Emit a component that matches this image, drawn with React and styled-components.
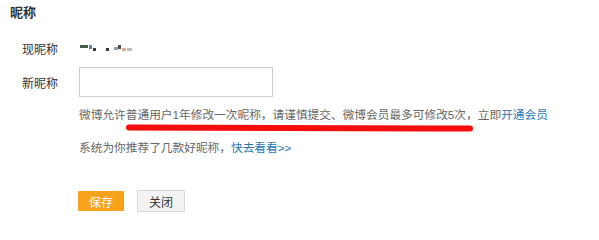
import React from "react";
import styled, { createGlobalStyle } from "styled-components";

const GlobalStyle = createGlobalStyle`
  body {
    margin: 0;
    background: #fff;
    font-family: "Liberation Sans", "Noto Sans CJK SC", sans-serif;
    color: #333;
  }
`;

// blurred-out current nickname, drawn as a few coloured pixels
const censorPixels = [
  { c: "#2f4a2c", w: 8, h: 3, t: 0, gap: 1 },
  { c: "#5574a8", w: 3, h: 4, t: 0, gap: 1 },
  { c: "#222", w: 3, h: 3, t: 3, gap: 10 },
  { c: "#222", w: 3, h: 3, t: 3, gap: 5 },
  { c: "#8a93a8", w: 4, h: 3, t: 2, gap: 0 },
  { c: "#3a3a3a", w: 3, h: 4, t: 0, gap: 1 },
  { c: "#d9a08a", w: 4, h: 3, t: 3, gap: 1 },
  { c: "#b8b8b8", w: 5, h: 3, t: 3, gap: 0 },
];

const App = () => {
  return (
    <Page>
      <GlobalStyle />
      <Title>昵称</Title>
      <Form>
        <Row>
          <Label>现昵称</Label>
          <Censored>
            {censorPixels.map((p, i) => (
              <Pixel key={i} $color={p.c} $w={p.w} $h={p.h} $top={p.t} $gap={p.gap} />
            ))}
          </Censored>
        </Row>
        <Row $gap={4}>
          <Label>新昵称</Label>
          <NickInput type="text" />
        </Row>
        <Hint $gap={8}>
          微博允许普通用户1年修改一次昵称，请谨慎提交、微博会员最多可修改5次，立即
          <Link>开通会员</Link>
          <Scribble width="350" height="20" viewBox="0 0 350 20">
            <defs>
              <filter id="soft" x="-5%" y="-300%" width="110%" height="700%">
                <feGaussianBlur stdDeviation="0.7" />
              </filter>
            </defs>
            <path
              d="M4 9.5 C 90 10.5, 220 11, 345 10.5"
              stroke="#f40a0a"
              strokeWidth="6"
              strokeLinecap="round"
              fill="none"
              filter="url(#soft)"
            />
          </Scribble>
        </Hint>
        <Hint $gap={13}>
          系统为你推荐了几款好昵称，<Link>快去看看&gt;&gt;</Link>
        </Hint>
        <Buttons>
          <Button $primary>保存</Button>
          <Button>关闭</Button>
        </Buttons>
      </Form>
    </Page>
  );
};

export default App;

const Page = styled.div`
  width: 599px;
  height: 230px;
  padding-left: 10px;
  box-sizing: border-box;
  overflow: hidden;
`;

const Title = styled.div`
  padding-top: 3px;
  font-size: 13px;
  line-height: 20px;
  font-weight: bold;
  color: #333;
`;

const Form = styled.div`
  padding-left: 12px;
`;

const Row = styled.div`
  display: flex;
  align-items: center;
  height: 30px;
  margin-top: ${(p) => p.$gap ?? 10}px;
`;

const Label = styled.span`
  width: 57px;
  flex-shrink: 0;
  font-size: 12px;
  color: #333;
`;

const Censored = styled.span`
  display: flex;
  align-items: flex-start;
  height: 6px;
  margin-left: 1px;
`;

const Pixel = styled.span`
  display: block;
  width: ${(p) => p.$w}px;
  height: ${(p) => p.$h}px;
  margin-top: ${(p) => p.$top}px;
  margin-right: ${(p) => p.$gap}px;
  background: ${(p) => p.$color};
  opacity: 0.9;
`;

const NickInput = styled.input`
  width: 194px;
  height: 30px;
  box-sizing: border-box;
  border: 1px solid #cfcfcf;
  padding: 0 6px;
  outline: none;
  font-size: 12px;
`;

const Hint = styled.div`
  position: relative;
  margin-top: ${(p) => p.$gap}px;
  margin-left: 57px;
  font-size: 11.7px;
  line-height: 20px;
  color: #666;
  white-space: nowrap;
`;

const Link = styled.a`
  color: #2a77b3;
  text-decoration: none;
  cursor: pointer;
`;

const Scribble = styled.svg`
  position: absolute;
  left: 46px;
  top: 13px;
  pointer-events: none;
`;

const Buttons = styled.div`
  display: flex;
  align-items: center;
  gap: 13px;
  margin-top: 32px;
  margin-left: 56px;
`;

const Button = styled.button`
  height: ${(p) => (p.$primary ? 20 : 22)}px;
  width: ${(p) => (p.$primary ? 46 : 48)}px;
  padding: 0;
  font-family: inherit;
  font-size: 12px;
  border: ${(p) => (p.$primary ? "none" : "1px solid #d6d6d6")};
  background: ${(p) => (p.$primary ? "#f7a21b" : "#f3f3f3")};
  color: ${(p) => (p.$primary ? "#fff" : "#333")};
  border-radius: 1px;
  cursor: pointer;
`;
